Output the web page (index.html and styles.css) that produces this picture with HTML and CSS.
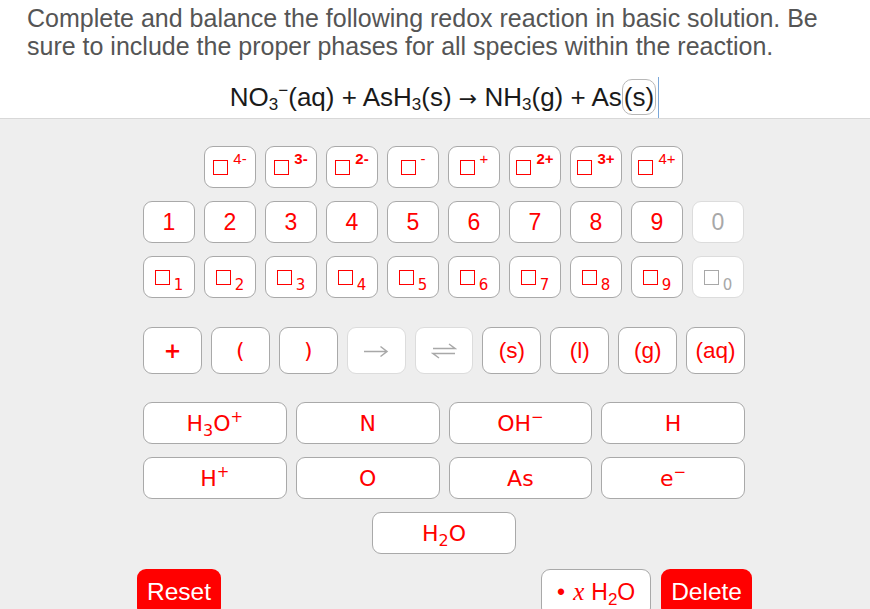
FILE: index.html
```html
<!DOCTYPE html>
<html>
<head>
<meta charset="utf-8">
<link rel="stylesheet" href="styles.css">
</head>
<body>
<div class="header">
  <p class="prompt">Complete and balance the following redox reaction in basic solution. Be sure to include the proper phases for all species within the reaction.</p>
  <div class="equation"><span class="eq">NO<sub>3</sub><sup>−</sup>(aq) + AsH<sub>3</sub>(s) <span class="arr">→</span> NH<sub>3</sub>(g) + As<span class="slot">(s)</span></span><span class="cursor"></span></div>
</div>
<div class="keys">
  <div class="grid10">
    <button class="key charge c2"><span class="lbl"><span class="box"></span><sup>4-</sup></span></button>
    <button class="key charge"><span class="lbl"><span class="box"></span><sup class="b">3-</sup></span></button>
    <button class="key charge"><span class="lbl"><span class="box"></span><sup class="b">2-</sup></span></button>
    <button class="key charge"><span class="lbl"><span class="box"></span><sup>-</sup></span></button>
    <button class="key charge"><span class="lbl"><span class="box"></span><sup>+</sup></span></button>
    <button class="key charge"><span class="lbl"><span class="box"></span><sup class="b">2+</sup></span></button>
    <button class="key charge"><span class="lbl"><span class="box"></span><sup class="b">3+</sup></span></button>
    <button class="key charge"><span class="lbl"><span class="box"></span><sup>4+</sup></span></button>
  </div>
  <div class="grid10">
    <button class="key num">1</button>
    <button class="key num">2</button>
    <button class="key num">3</button>
    <button class="key num">4</button>
    <button class="key num">5</button>
    <button class="key num">6</button>
    <button class="key num">7</button>
    <button class="key num">8</button>
    <button class="key num">9</button>
    <button class="key num off">0</button>
  </div>
  <div class="grid10">
    <button class="key subk"><span class="lbl"><span class="box"></span><sub>1</sub></span></button>
    <button class="key subk"><span class="lbl"><span class="box"></span><sub>2</sub></span></button>
    <button class="key subk"><span class="lbl"><span class="box"></span><sub>3</sub></span></button>
    <button class="key subk"><span class="lbl"><span class="box"></span><sub>4</sub></span></button>
    <button class="key subk"><span class="lbl"><span class="box"></span><sub>5</sub></span></button>
    <button class="key subk"><span class="lbl"><span class="box"></span><sub>6</sub></span></button>
    <button class="key subk"><span class="lbl"><span class="box"></span><sub>7</sub></span></button>
    <button class="key subk"><span class="lbl"><span class="box"></span><sub>8</sub></span></button>
    <button class="key subk"><span class="lbl"><span class="box"></span><sub>9</sub></span></button>
    <button class="key subk off"><span class="lbl"><span class="box"></span><sub>0</sub></span></button>
  </div>
  <div class="grid9">
    <button class="key sym plus">+</button>
    <button class="key sym">(</button>
    <button class="key sym">)</button>
    <button class="key sym off" aria-label="→"><svg width="26" height="14" viewBox="0 0 26 14"><path d="M1 7.5 H24 M17.5 2.5 L24 7.5 L17.5 12.5" fill="none" stroke="#a8a8a8" stroke-width="1.5"/></svg></button>
    <button class="key sym off" aria-label="⇌"><svg width="26" height="16" viewBox="0 0 26 16"><path d="M2 5.5 H24 L18 1 M24 10.5 H2 L8 15" fill="none" stroke="#a8a8a8" stroke-width="1.4"/></svg></button>
    <button class="key phase">(s)</button>
    <button class="key phase">(l)</button>
    <button class="key phase">(g)</button>
    <button class="key phase">(aq)</button>
  </div>
  <div class="grid4">
    <button class="key spec"><span class="lbl">H<sub>3</sub>O<sup>+</sup></span></button>
    <button class="key spec">N</button>
    <button class="key spec"><span class="lbl">OH<sup>−</sup></span></button>
    <button class="key spec">H</button>
    <button class="key spec"><span class="lbl">H<sup>+</sup></span></button>
    <button class="key spec">O</button>
    <button class="key spec">As</button>
    <button class="key spec"><span class="lbl">e<sup>−</sup></span></button>
  </div>
  <div class="center-row">
    <button class="key spec wide"><span class="lbl">H<sub>2</sub>O</span></button>
  </div>
  <div class="bottom">
    <button class="action">Reset</button>
    <div class="bottom-right">
      <button class="key hydrate"><span class="lbl"><span class="dot">•</span><i>x</i>H<sub>2</sub>O</span></button>
      <button class="action">Delete</button>
    </div>
  </div>
</div>
</body>
</html>
```
FILE: styles.css
```css
body {
  margin: 0;
  background: #eeeeee;
  font-family: "Liberation Sans", Arial, sans-serif;
  overflow: hidden;
}
.header {
  background: #ffffff;
  height: 119px;
  box-sizing: border-box;
  border-bottom: 1px solid #d8d8d8;
  padding: 4px 27px 0 27px;
}
.prompt {
  margin: 0;
  font-size: 25px;
  line-height: 28px;
  color: #555555;
}
.equation {
  display: flex;
  justify-content: center;
  align-items: center;
  padding-left: 19px;
  margin-top: 16px;
  height: 42px;
  font-size: 26px;
  color: #1a1a1a;
}
.eq sub {
  font-size: 17px;
  vertical-align: -4px;
  line-height: 0;
}
.eq sup {
  font-size: 17px;
  vertical-align: 10px;
  line-height: 0;
}
.arr {
  font-family: "DejaVu Sans", sans-serif;
  font-size: 22px;
}
.slot {
  display: inline-block;
  border: 1px solid #b8b8b8;
  border-radius: 10px;
  padding: 3px 1px;
  line-height: 28px;
}
.cursor {
  display: inline-block;
  width: 1px;
  height: 41px;
  background: #7aa7d9;
  margin-left: 2px;
  align-self: flex-end;
}
.keys {
  margin-left: 143px;
  width: 602px;
  padding-top: 27px;
}
.grid10 {
  display: grid;
  grid-template-columns: repeat(10, 52px);
  column-gap: 9px;
  margin-bottom: 13px;
}
.grid9 {
  display: grid;
  grid-template-columns: repeat(9, 1fr);
  column-gap: 9px;
  margin-top: 29px;
  margin-bottom: 28px;
}
.grid4 {
  display: grid;
  grid-template-columns: repeat(4, 1fr);
  column-gap: 9px;
  row-gap: 13px;
}
.center-row {
  display: flex;
  justify-content: center;
  margin-top: 13px;
}
.key {
  height: 42px;
  box-sizing: border-box;
  background: #ffffff;
  border: 1px solid #a9a9a9;
  border-radius: 9px;
  color: #ff0000;
  padding: 0;
  margin: 0;
  font-family: "Liberation Sans", Arial, sans-serif;
  display: flex;
  align-items: center;
  justify-content: center;
}
.key.off {
  border-color: #dcdcdc;
  color: #a8a8a8;
}
.lbl {
  display: inline-block;
  white-space: nowrap;
}
.c2 { grid-column-start: 2; }
.box {
  display: inline-block;
  width: 15px;
  height: 15px;
  box-sizing: border-box;
  border: 1.5px solid #ff0000;
  vertical-align: middle;
}
.off .box { border-color: #a8a8a8; }
.charge sup {
  font-size: 15px;
  margin-left: 5px;
  vertical-align: 8px;
  line-height: 0;
}
.charge sup.b { font-weight: bold; font-size: 15px; }
.num {
  font-size: 23px;
}
.subk sub {
  font-family: "DejaVu Sans", sans-serif;
  font-size: 15px;
  margin-left: 4px;
  vertical-align: -9px;
  line-height: 0;
}
.grid9 .key { height: 47px; }
.sym {
  font-family: "DejaVu Sans", sans-serif;
  font-size: 22px;
}
.sym.plus { font-size: 21px; font-weight: bold; }
.phase {
  font-size: 22.5px;
}
.spec {
  font-family: "DejaVu Sans", sans-serif;
  font-size: 22px;
}
.spec sub {
  font-size: 16px;
  line-height: 0;
  vertical-align: -5px;
}
.spec sup {
  font-size: 15px;
  line-height: 0;
  vertical-align: 9px;
}
.wide { width: 144px; }
.bottom {
  display: flex;
  justify-content: space-between;
  margin-left: -6px;
  width: 615px;
  margin-top: 15px;
}
.bottom-right {
  display: flex;
  gap: 10px;
}
.action {
  height: 48px;
  background: #ff0000;
  color: #ffffff;
  border: none;
  border-radius: 9px;
  font-family: "Liberation Sans", Arial, sans-serif;
  font-size: 24.5px;
  padding: 0 10px 2px 10px;
  display: flex;
  align-items: center;
}
.hydrate {
  width: 110px;
  height: 48px;
  font-size: 23px;
  padding-bottom: 2px;
}
.hydrate .dot { margin-right: 8px; }
.hydrate i {
  font-family: "Liberation Serif", serif;
  font-size: 25px;
  margin-right: 7px;
}
.hydrate sub {
  font-size: 17px;
  line-height: 0;
  vertical-align: -5px;
}
```
